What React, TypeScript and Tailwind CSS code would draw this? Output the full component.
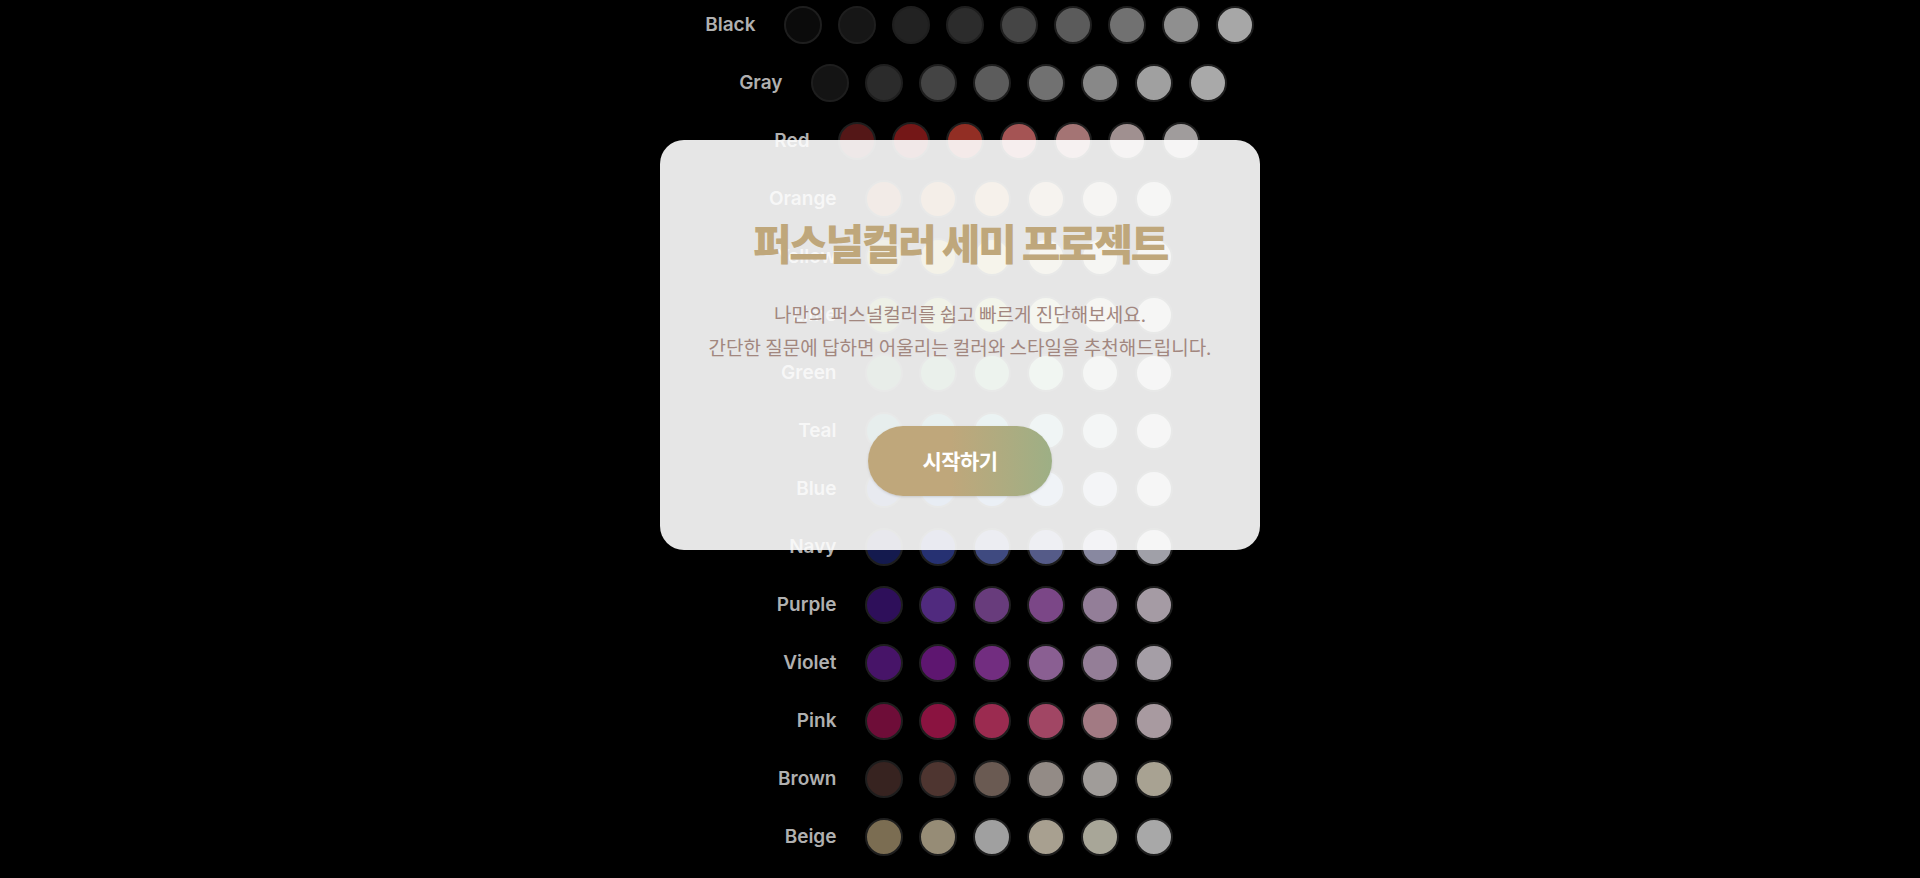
import React from 'react';

type Palette = { name: string; shades: string[] };

const palettes: Palette[] = [
  { name: 'Black', shades: ['#0b0b0b', '#161616', '#222222', '#2c2c2c', '#454545', '#5b5b5b', '#717171', '#8f8f8f', '#a7a7a7'] },
  { name: 'Gray', shades: ['#141414', '#2b2b2b', '#444444', '#5c5c5c', '#717171', '#888888', '#a0a0a0', '#a9a9a9'] },
  { name: 'Red', shades: ['#541717', '#741717', '#922e24', '#a55454', '#a47474', '#a09090', '#a09c9c'] },
  { name: 'Orange', shades: ['#7a3b12', '#93521c', '#a36e33', '#a7855f', '#a69a8b', '#a6a29d'] },
  { name: 'Yellow', shades: ['#6e5e12', '#8c7a1c', '#a39438', '#a79e66', '#a6a28a', '#a6a59c'] },
  { name: 'Lime', shades: ['#4e6412', '#677e1c', '#829838', '#98a266', '#a0a68a', '#a4a69c'] },
  { name: 'Green', shades: ['#1b4e26', '#2a6a3a', '#4a8656', '#76a07e', '#97a69a', '#a2a6a3'] },
  { name: 'Teal', shades: ['#12504e', '#1c6a68', '#3a8684', '#6a9e9c', '#90a4a3', '#a0a6a6'] },
  { name: 'Blue', shades: ['#14306e', '#1e4690', '#3a64a8', '#6a88b0', '#8f9cae', '#a0a4aa'] },
  { name: 'Navy', shades: ['#141a4e', '#263172', '#3f4a80', '#555b88', '#8888a0', '#a0a0a8'] },
  { name: 'Purple', shades: ['#2e0f5a', '#502a7e', '#683c7c', '#7b4787', '#937e98', '#a59ba4'] },
  { name: 'Violet', shades: ['#471468', '#5e1670', '#722d80', '#8a5f92', '#947e97', '#a59ea6'] },
  { name: 'Pink', shades: ['#6e0d38', '#8a1340', '#9b2b50', '#a14664', '#a27a83', '#a89aa0'] },
  { name: 'Brown', shades: ['#372320', '#4e3530', '#6a5a52', '#938b86', '#a09c99', '#a8a292'] },
  { name: 'Beige', shades: ['#7b6d52', '#968c76', '#a0a0a0', '#a8a090', '#a8a698', '#a8a8a8'] },
];

const PaletteRow: React.FC<{ palette: Palette }> = ({ palette }) => (
  <div className="flex items-center justify-center gap-7">
    <span className="w-[89px] text-right text-[19px] font-semibold text-[#b0b0b0]">{palette.name}</span>
    <div className="flex gap-4">
      {palette.shades.map((c) => (
        <span
          key={c}
          className="block h-[38px] w-[38px] rounded-full border-2 border-[#1e1e1e]"
          style={{ backgroundColor: c }}
        />
      ))}
    </div>
  </div>
);

const App: React.FC = () => {
  return (
    <div
      className="relative h-screen overflow-hidden bg-black"
      style={{ fontFamily: 'Inter, "Noto Sans CJK KR", sans-serif' }}
    >
      <div className="flex flex-col gap-5 pt-[6px]">
        {palettes.map((p) => (
          <PaletteRow key={p.name} palette={p} />
        ))}
      </div>

      {/* intro dialog */}
      <div
        className="absolute left-1/2 top-[140px] flex h-[410px] w-[600px] -translate-x-1/2 flex-col items-center rounded-3xl bg-white/90 pt-[76px] text-center"
        style={{ fontFamily: '"Noto Sans CJK KR", sans-serif' }}
      >
        <h1 className="text-[42px] font-black leading-tight tracking-[-0.055em] text-[#bfa77b]">
          퍼스널컬러 세미 프로젝트
        </h1>
        <p className="mt-[28px] text-[19px] leading-[33px] text-[#a2877f]">
          나만의 퍼스널컬러를 쉽고 빠르게 진단해보세요.
          <br />
          간단한 질문에 답하면 어울리는 컬러와 스타일을 추천해드립니다.
        </p>
        <button className="mt-[63px] h-[70px] w-[184px] rounded-full bg-linear-to-r from-[#bfa77b] from-45% to-[#9daf85] text-[21px] font-bold tracking-tight text-white shadow-sm">
          시작하기
        </button>
      </div>
    </div>
  );
};

export default App;
